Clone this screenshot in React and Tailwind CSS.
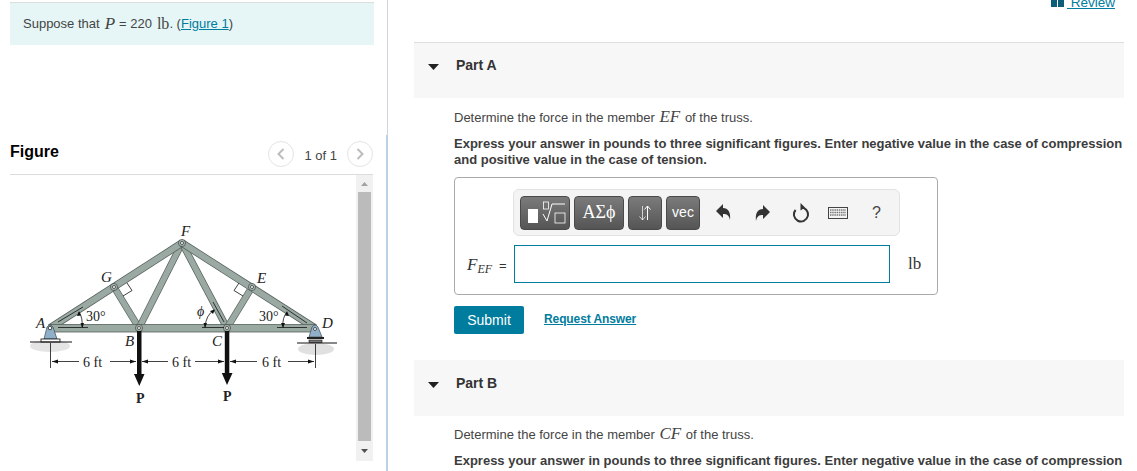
const serif = "font-['Liberation_Serif',serif]";

const rafters = [
  [50, 328, 182, 243],
  [182, 243, 315, 328],
];
const webs = [
  [114, 287, 139, 328],
  [139, 328, 182, 243],
  [182, 243, 227, 328],
  [227, 328, 252, 287],
];
const pins = [
  [114, 287],
  [252, 287],
  [182, 243],
  [139, 328],
  [227, 328],
];
const labels = [
  ['A', 36, 328],
  ['G', 101, 282],
  ['F', 181, 236],
  ['E', 257, 283],
  ['D', 322, 328],
  ['B', 125, 346],
  ['C', 212, 346],
];
const dims = [
  ['6 ft', 83],
  ['6 ft', 172],
  ['6 ft', 262],
];
// little arrowheads on the dimension lines
const heads = [
  'M52 361.5 L58 359.5 V363.5 Z',
  'M136 361.5 L130 359.5 V363.5 Z',
  'M142 361.5 L148 359.5 V363.5 Z',
  'M224 361.5 L218 359.5 V363.5 Z',
  'M230 361.5 L236 359.5 V363.5 Z',
  'M314 361.5 L308 359.5 V363.5 Z',
  'M79 311 L77 316 L81 315.5 Z',
  'M287 311 L285 315.5 L289 316 Z',
  'M215 309.5 L210 311 L213 314 Z',
  'M82.5 328 L80.5 323 L84 323 Z',
  'M283 328 L281 323 L285 323 Z',
  'M205 328 L203.5 323 L207 323 Z',
];

const Member = ({ m, w }) => (
  <g>
    <line x1={m[0]} y1={m[1]} x2={m[2]} y2={m[3]} stroke="#56615c" strokeWidth={w} />
    <line x1={m[0]} y1={m[1]} x2={m[2]} y2={m[3]} stroke="#9aaaa2" strokeWidth={w - 1.4} />
  </g>
);

const Truss = () => (
  <svg viewBox="10 175 346 286" className="block w-[346px] h-[286px]">
    <ellipse cx="50" cy="346" rx="20" ry="6" fill="#e4e4e4" />
    <ellipse cx="316" cy="349" rx="18" ry="6" fill="#e0e0e0" />
    {webs.map((m, i) => <Member key={i} m={m} w={7} />)}
    {rafters.map((m, i) => <Member key={i} m={m} w={7.5} />)}
    <rect x="50" y="324.5" width="265" height="7.5" fill="#9aaaa2" stroke="#56615c" strokeWidth="0.8" />

    {/* supports */}
    <path d="M44 339 L47 327 Q50 323 53 327 L57 339 Z" fill="#8fb0c8" stroke="#3c4a52" strokeWidth="0.7" />
    <rect x="41" y="339" width="19" height="3" fill="#fff" stroke="#111" strokeWidth="0.8" />
    <line x1="30" y1="342" x2="72" y2="342" stroke="#111" />
    <path d="M309 337 L312 327 Q315 323 318 327 L322 337 Z" fill="#8fb0c8" stroke="#3c4a52" strokeWidth="0.7" />
    <rect x="307" y="337" width="17" height="2" fill="#222" />
    <rect x="309" y="340" width="13" height="2.5" fill="#777" stroke="#111" strokeWidth="0.6" />
    <line x1="297" y1="343" x2="337" y2="343" stroke="#111" />

    {pins.map(([x, y], i) => (
      <g key={i}>
        <circle cx={x} cy={y} r="3.6" fill="#a5b3ac" stroke="#3f4945" strokeWidth="0.7" />
        <circle cx={x} cy={y} r="1.5" fill="#fff" stroke="#222" strokeWidth="0.7" />
      </g>
    ))}
    <circle cx="50" cy="328" r="1.8" fill="#fff" stroke="#222" strokeWidth="0.8" />
    <circle cx="315" cy="329" r="1.5" fill="#fff" stroke="#222" strokeWidth="0.7" />

    {/* angle marks */}
    <g stroke="#111" strokeWidth="0.8" fill="none">
      <line x1="58" y1="327.5" x2="88" y2="327.5" />
      <line x1="58" y1="322" x2="83" y2="307" />
      <path d="M82 327 Q83 318 79 312" />
      <line x1="277" y1="327.5" x2="307" y2="327.5" />
      <line x1="282" y1="306" x2="307" y2="323" />
      <path d="M283 327 Q282 318 287 312" />
      <line x1="202" y1="327.5" x2="224" y2="327.5" />
      <line x1="213" y1="302" x2="224" y2="322" />
      <path d="M205 327 Q206 315 214 310" />
      <path d="M127 283 L132 290.5 L123 296" />
      <path d="M239 283 L234 290.5 L243 296" />
    </g>

    {/* dimensions */}
    <g stroke="#111" strokeWidth="0.8">
      <line x1="50.5" y1="343" x2="50.5" y2="368" />
      <line x1="315.5" y1="344" x2="315.5" y2="368" />
      <line x1="52" y1="361.5" x2="79" y2="361.5" />
      <line x1="110" y1="361.5" x2="136" y2="361.5" />
      <line x1="142" y1="361.5" x2="168" y2="361.5" />
      <line x1="195" y1="361.5" x2="224" y2="361.5" />
      <line x1="230" y1="361.5" x2="257" y2="361.5" />
      <line x1="288" y1="361.5" x2="314" y2="361.5" />
    </g>
    {heads.map((d, i) => <path key={i} d={d} fill="#111" />)}

    {/* loads */}
    <path d="M137 331 H141.5 V374 H144.5 L139.3 386 L134 374 H137 Z" fill="#111" />
    <path d="M224.8 331 H229.3 V373 H232.5 L227 385 L221.8 373 H224.8 Z" fill="#111" />

    <g fontFamily="'Liberation Serif',serif" fontSize="14" fill="#222">
      {labels.map(([t, x, y]) => (
        <text key={t} x={x} y={y} fontStyle="italic" fontSize="15">{t}</text>
      ))}
      {dims.map(([t, x], i) => (
        <text key={i} x={x} y={367}>{t}</text>
      ))}
      <text x="86" y="321">30°</text>
      <text x="259" y="321">30°</text>
      <text x="197" y="316" fontStyle="italic">ϕ</text>
      <text x="136" y="403" fontWeight="700">P</text>
      <text x="223" y="401" fontWeight="700">P</text>
    </g>
  </svg>
);

const Pager = () => (
  <div className="flex items-center mt-[1px]">
    <div className="w-[26px] h-[26px] rounded-full border border-[#e4e4e4] flex items-center justify-center">
      <svg width="10" height="14" viewBox="0 0 10 14"><path d="M7.5 2 L2.5 7 L7.5 12" fill="none" stroke="#bcbcbc" strokeWidth="2" /></svg>
    </div>
    <span className="ml-[10px] mr-[10px] text-[13px] text-[#444] relative top-[2px]">1 of 1</span>
    <div className="w-[26px] h-[26px] rounded-full border border-[#e4e4e4] flex items-center justify-center">
      <svg width="10" height="14" viewBox="0 0 10 14"><path d="M2.5 2 L7.5 7 L2.5 12" fill="none" stroke="#bcbcbc" strokeWidth="2" /></svg>
    </div>
  </div>
);

const ScrollBar = () => (
  <div className="w-[17px] h-[286px] bg-[#f1f1f1] flex flex-col items-center">
    <div className="h-[17px] flex items-center justify-center">
      <svg width="7" height="4" viewBox="0 0 7 4"><path d="M3.5 0 L7 4 H0 Z" fill="#a3a3a3" /></svg>
    </div>
    <div className="w-[13px] h-[249px] bg-[#bbbbbb]" />
    <div className="flex-1 flex items-center justify-center">
      <svg width="7" height="4" viewBox="0 0 7 4"><path d="M0 0 H7 L3.5 4 Z" fill="#505050" /></svg>
    </div>
  </div>
);

const ToolBtn = ({ className, children }) => (
  <div className={`h-[34px] rounded-[4px] border border-[#4a4a4a] bg-gradient-to-b from-[#7b7b7b] to-[#555555] flex items-center justify-center text-white ${className}`}>
    {children}
  </div>
);

const Toolbar = () => (
  <div className="w-[387px] h-[47px] rounded-[6px] border border-[#e2e2e2] bg-[#f4f4f4] flex items-center pl-[6px]">
    <ToolBtn className="w-[50px] mr-[4px]">
      <svg width="44" height="28" viewBox="0 0 44 28">
        <rect x="5" y="10" width="10" height="14" fill="#fff" />
        <rect x="20.5" y="3" width="5" height="7" fill="none" stroke="#fff" strokeWidth="0.8" />
        <path d="M20 15 L24 22 L29 5 H42" fill="none" stroke="#fff" strokeWidth="1" />
        <rect x="32" y="14" width="10" height="10" fill="none" stroke="#fff" strokeWidth="0.8" />
      </svg>
    </ToolBtn>
    <ToolBtn className={`w-[50px] mr-[4px] text-[18px] ${serif}`}>ΑΣϕ</ToolBtn>
    <ToolBtn className="w-[34px] mr-[4px]">
      <svg width="14" height="18" viewBox="0 0 14 18" fill="none" stroke="#fff" strokeWidth="1">
        <path d="M4.5 2 V16 M1.5 12.5 L4.5 16 L7.5 12.5" opacity="0.7" />
        <path d="M9.5 16 V2 M6.5 5.5 L9.5 2 L12.5 5.5" />
      </svg>
    </ToolBtn>
    <ToolBtn className="w-[34px] text-[14px]">vec</ToolBtn>
    <div className="flex items-center text-[#333]">
      <svg className="ml-[16px] relative top-[-1px]" width="15" height="16" viewBox="0 0 15 16">
        <path d="M0 7 L7 0 V4 C12 4 15 8 14 16 C13 11 11 10 7 10 V14 Z" fill="#333" />
      </svg>
      <svg className="ml-[24px]" width="15" height="16" viewBox="0 0 15 16">
        <path d="M15 7 L8 0 V4 C3 4 0 8 1 16 C2 11 4 10 8 10 V14 Z" fill="#333" />
      </svg>
      <svg className="ml-[22px]" width="18" height="20" viewBox="0 0 18 20" fill="none">
        <path d="M9 3.5 A7 7 0 1 1 3.6 6" stroke="#333" strokeWidth="2" transform="translate(0 1)" />
        <path d="M8.5 0 L13 4.5 L8.5 7.5 Z" fill="#333" />
      </svg>
      <svg className="ml-[18px]" width="20" height="12" viewBox="0 0 20 12">
        <rect x="0.5" y="0.5" width="19" height="11" fill="#f4f4f4" stroke="#444" />
        <path d="M2 3 H18 M2 5.5 H18 M2 8 H18" stroke="#777" strokeWidth="1.4" strokeDasharray="1.5 0.7" />
      </svg>
      <span className="ml-[24px] text-[16px] text-[#444]">?</span>
    </div>
  </div>
);

const PartBar = ({ label, className }) => (
  <div className={`bg-[#f7f7f7] flex items-start ${className}`}>
    <svg className="ml-[14px] mt-[9px]" width="11" height="6" viewBox="0 0 11 6"><path d="M0 0 H11 L5.5 6 Z" fill="#222" /></svg>
    <span className="ml-[17px] text-[14px] leading-[20px] font-bold text-[#333]">{label}</span>
  </div>
);

const Express = () => (
  <p className="text-[13px] leading-[16px] font-bold text-[#3c3c3c] whitespace-nowrap">
    Express your answer in pounds to three significant figures. Enter negative value in the case of compression
    <br />
    and positive value in the case of tension.
  </p>
);

const App = () => {
  return (
    <div className="w-[1137px] h-[471px] overflow-hidden flex bg-white font-['Liberation_Sans',sans-serif] text-[#333]">
      <aside className="w-[386px] shrink-0 pl-[10px] pr-[13px] pt-[2px]">
        <div className="h-[43px] mr-[-1px] bg-[#e6f6f7] border-t border-[#dcdcdc] pl-[13px] pb-[1px] flex items-center text-[13px] text-[#444]">
          <span>Suppose that</span>
          <span className={`${serif} italic text-[17px] ml-[5px] mr-[4px]`}>P</span>
          <span>= 220</span>
          <span className={`${serif} text-[16px] ml-[5px]`}>lb</span>
          <span>.&nbsp;(</span>
          <span className="text-[#007c9e] underline">Figure 1</span>
          <span>)</span>
        </div>
        <div className="mt-[95px] h-[35px] border-b border-[#dcdcdc] flex items-start justify-between">
          <h2 className="text-[16px] font-bold text-black">Figure</h2>
          <Pager />
        </div>
        <div className="flex justify-between">
          <Truss />
          <ScrollBar />
        </div>
      </aside>

      <div className="w-[2px] shrink-0 flex flex-col items-end">
        <div className="w-[1px] h-[135px] bg-[#cdd6e0]" />
        <div className="w-[2px] flex-1 bg-[#bdd1e4]" />
      </div>

      <main className="flex-1 pl-[26px] pr-[13px] min-w-0 overflow-hidden">
        <div className="h-[43px] flex justify-end items-start pr-[9px] border-b border-[#dedede]">
          <div className="flex items-start mt-[-7px] text-[13.5px] leading-[20px] text-[#007c9e]">
            <svg className="mr-[3px] mt-[1px]" width="13" height="13" viewBox="0 0 13 13"><path d="M0 0 H6 V13 H0 Z M7 0 H13 V13 H7 Z" fill="#0b5f7a" /></svg>
            <span className="underline">&nbsp;Review</span>
          </div>
        </div>
        <PartBar label="Part A" className="h-[55px] pt-[12px]" />
        <div className="pl-[40px]">
          <p className="mt-[9px] h-[20px] leading-[20px] text-[13px] text-[#444] whitespace-nowrap">
            Determine the force in the member <span className={`${serif} italic text-[17px] ml-[1px] mr-[1px]`}>EF</span> of the truss.
          </p>
          <div className="mt-[9px]"><Express /></div>
          <div className="mt-[9px] w-[484px] h-[118px] rounded-[4px] border border-[#aaaaaa] pt-[11px] pl-[58px] relative">
            <Toolbar />
            <div className="mt-[9px] ml-[1px] flex items-center h-[38px]">
              <div className={`absolute left-[12px] top-[74px] ${serif} italic text-[17px] text-[#333] whitespace-nowrap`}>
                F<sub className="text-[12px] bottom-[-3px] relative">EF</sub>
                <span className="not-italic font-['Liberation_Sans',sans-serif] text-[13px] ml-[7px]">=</span>
              </div>
              <div className="w-[376px] h-[38px] border border-[#007c9e] bg-white" />
              <span className={`ml-[18px] ${serif} text-[17px] text-[#333]`}>lb</span>
            </div>
          </div>
          <div className="mt-[11px] flex items-center">
            <div className="w-[70px] h-[28px] rounded-[2px] bg-[#007c9e] text-white text-[14px] flex items-center justify-center">Submit</div>
            <span className="ml-[20px] text-[12px] font-bold tracking-[-0.1px] text-[#007c9e] underline relative top-[-1px]">Request Answer</span>
          </div>
        </div>
        <div className="mt-[26px]"><PartBar label="Part B" className="h-[56px] pt-[13px]" /></div>
        <div className="pl-[40px]">
          <p className="mt-[8px] h-[20px] leading-[20px] text-[13px] text-[#444] whitespace-nowrap">
            Determine the force in the member <span className={`${serif} italic text-[17px] ml-[1px] mr-[1px]`}>CF</span> of the truss.
          </p>
          <div className="mt-[9px]"><Express /></div>
        </div>
      </main>
    </div>
  );
};

export default App;
